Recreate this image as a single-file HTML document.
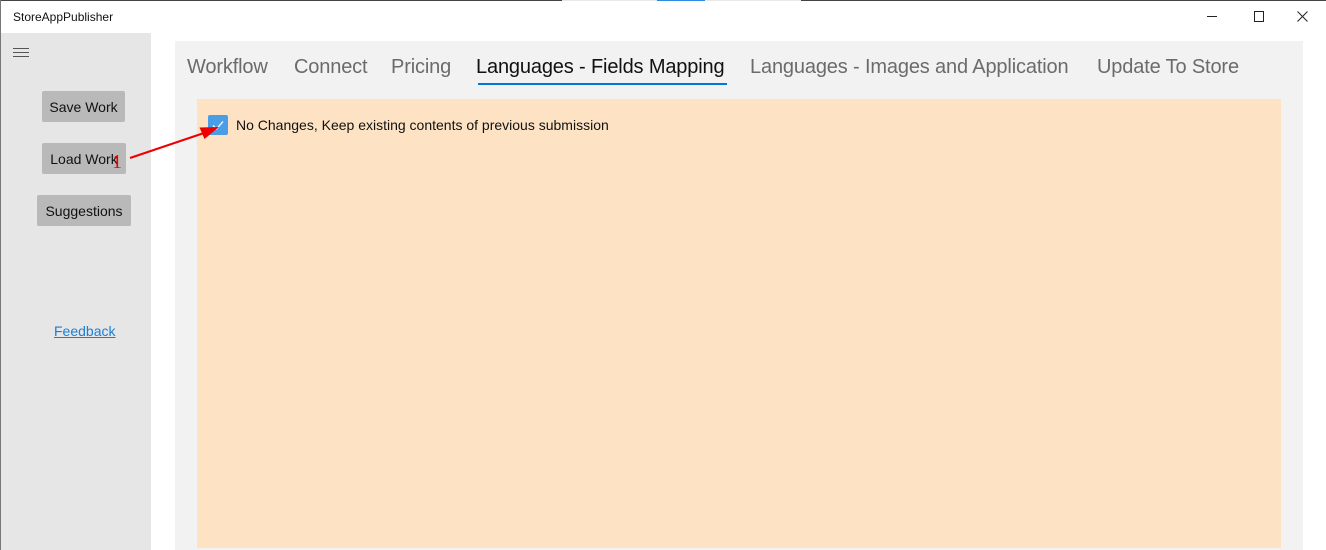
<!DOCTYPE html>
<html><head><meta charset="utf-8"><style>
*{margin:0;padding:0;box-sizing:border-box}
body{width:1326px;height:550px;overflow:hidden;background:#fff;font-family:"Liberation Sans",sans-serif;position:relative}
.a{position:absolute}
.btn{position:absolute;background:#b9b9b9;border-radius:2px;font-size:14px;color:#111;text-align:center;line-height:33px;height:31px}
.tab{position:absolute;top:56px;font-size:20px;color:#6b6b6b;white-space:nowrap;letter-spacing:-0.15px}
</style></head><body>
<div class="a" style="left:0;top:0;width:562px;height:1px;background:#444"></div>
<div class="a" style="left:562px;top:0;width:95px;height:1px;background:#e8e8e8"></div>
<div class="a" style="left:657px;top:0;width:48px;height:1px;background:#2b8be0"></div>
<div class="a" style="left:705px;top:0;width:96px;height:1px;background:#e8e8e8"></div>
<div class="a" style="left:801px;top:0;width:525px;height:1px;background:#444"></div>
<div class="a" style="left:0;top:0;width:1px;height:550px;background:#777"></div>
<div class="a" style="left:13px;top:10px;font-size:12px;color:#111">StoreAppPublisher</div>
<div class="a" style="left:1207px;top:16px;width:10px;height:1px;background:#222"></div>
<div class="a" style="left:1254px;top:11px;width:10px;height:11px;border:1px solid #222"></div>
<svg class="a" style="left:1297px;top:11px" width="11" height="11"><path d="M0.5 0.5L10.5 10.5M10.5 0.5L0.5 10.5" stroke="#222" stroke-width="1"/></svg>
<div class="a" style="left:1px;top:33px;width:150px;height:517px;background:#e6e6e6"></div>
<div class="a" style="left:13px;top:48px;width:16px;height:1px;background:#555;box-shadow:0 4px 0 #555,0 8px 0 #555"></div>
<div class="btn" style="left:42px;top:91px;width:83px">Save Work</div>
<div class="btn" style="left:42px;top:143px;width:84px">Load Work</div>
<div class="btn" style="left:37px;top:195px;width:94px">Suggestions</div>
<div class="a" style="left:54px;top:323px;font-size:14px;color:#1a7fd6;text-decoration:underline">Feedback</div>
<div class="a" style="left:175px;top:41px;width:1128px;height:509px;background:#f2f2f2"></div>
<div class="tab" style="left:187px">Workflow</div>
<div class="tab" style="left:294px">Connect</div>
<div class="tab" style="left:391px">Pricing</div>
<div class="tab" style="left:476px;color:#111">Languages - Fields Mapping</div>
<div class="a" style="left:478px;top:83px;width:249px;height:2px;background:#0078d7"></div>
<div class="tab" style="left:750px">Languages - Images and Application</div>
<div class="tab" style="left:1097px">Update To Store</div>
<div class="a" style="left:197px;top:99px;width:1084px;height:449px;background:#fde3c4"></div>
<div class="a" style="left:208px;top:115px;width:20px;height:20px;background:#4a9ee8;border-radius:2px"></div>
<svg class="a" style="left:208px;top:115px" width="20" height="20"><path d="M5 10.5L8.5 14L15 6.5" fill="none" stroke="#fff" stroke-width="1.3"/></svg>
<div class="a" style="left:236px;top:117px;font-size:14px;color:#111">No Changes, Keep existing contents of previous submission</div>
<svg class="a" style="left:0;top:0" width="300" height="200"><path d="M130 158L204 133" stroke="#e00" stroke-width="2"/><path d="M219 127L199.5 127.5L204.5 139Z" fill="#e00"/></svg>
<div class="a" style="left:112px;top:151px;font-size:20px;color:#e00;font-family:'Liberation Serif',serif">1</div>
</body></html>
